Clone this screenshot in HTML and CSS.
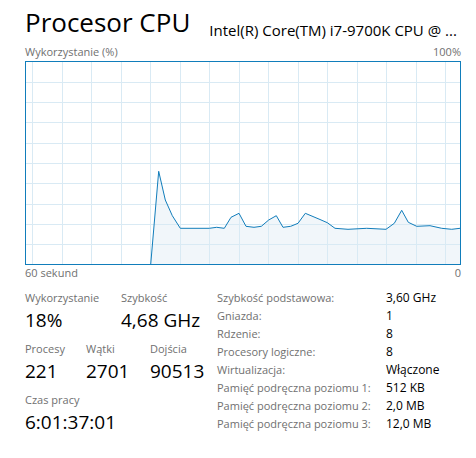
FILE: index.html
```html
<!DOCTYPE html>
<html lang="pl">
<head>
<meta charset="utf-8">
<title>Procesor CPU</title>
<link rel="stylesheet" href="styles.css">
</head>
<body>
<div class="page">
  <header class="header">
    <h1 class="title">Procesor CPU</h1>
    <div class="model">Intel(R) Core(TM) i7-9700K CPU @ ...</div>
  </header>
  <div class="graph-top">
    <span>Wykorzystanie (%)</span>
    <span>100%</span>
  </div>
  <svg class="graph" width="436" height="204" viewBox="0 0 436 204">
    <polygon class="fill" points="125.7,203 133.7,110.3 140.3,139 147.3,154.7 155.3,167.3 184.3,167.3 191.7,166.3 199.3,167.3 206,156.3 214,152.3 221,165.3 229,166.3 236.3,165.3 243.7,159 251.3,154.7 258,166.3 265.7,165.3 273,162.3 280.3,152.3 295,158.5 302.3,161.7 310,167.3 323,168.3 341.7,167.3 361,168.3 369.3,162.3 376.7,149.3 383.3,161.3 391.7,165.3 405,164.7 416.7,167.3 426.7,168.3 435,167.3 435,203"/>
    <g class="grid">
      <line x1="7.5" y1="0" x2="7.5" y2="204"/>
      <line x1="37.5" y1="0" x2="37.5" y2="204"/>
      <line x1="66.5" y1="0" x2="66.5" y2="204"/>
      <line x1="96.5" y1="0" x2="96.5" y2="204"/>
      <line x1="125.5" y1="0" x2="125.5" y2="204"/>
      <line x1="155.5" y1="0" x2="155.5" y2="204"/>
      <line x1="184.5" y1="0" x2="184.5" y2="204"/>
      <line x1="214.5" y1="0" x2="214.5" y2="204"/>
      <line x1="243.5" y1="0" x2="243.5" y2="204"/>
      <line x1="273.5" y1="0" x2="273.5" y2="204"/>
      <line x1="302.5" y1="0" x2="302.5" y2="204"/>
      <line x1="332.5" y1="0" x2="332.5" y2="204"/>
      <line x1="361.5" y1="0" x2="361.5" y2="204"/>
      <line x1="391.5" y1="0" x2="391.5" y2="204"/>
      <line x1="420.5" y1="0" x2="420.5" y2="204"/>
      <line x1="0" y1="21.5" x2="436" y2="21.5"/>
      <line x1="0" y1="41.5" x2="436" y2="41.5"/>
      <line x1="0" y1="61.5" x2="436" y2="61.5"/>
      <line x1="0" y1="82.5" x2="436" y2="82.5"/>
      <line x1="0" y1="102.5" x2="436" y2="102.5"/>
      <line x1="0" y1="122.5" x2="436" y2="122.5"/>
      <line x1="0" y1="143.5" x2="436" y2="143.5"/>
      <line x1="0" y1="163.5" x2="436" y2="163.5"/>
      <line x1="0" y1="183.5" x2="436" y2="183.5"/>
    </g>
    <polyline class="line" points="0,203.5 125.7,203.5 133.7,110.3 140.3,139 147.3,154.7 155.3,167.3 184.3,167.3 191.7,166.3 199.3,167.3 206,156.3 214,152.3 221,165.3 229,166.3 236.3,165.3 243.7,159 251.3,154.7 258,166.3 265.7,165.3 273,162.3 280.3,152.3 295,158.5 302.3,161.7 310,167.3 323,168.3 341.7,167.3 361,168.3 369.3,162.3 376.7,149.3 383.3,161.3 391.7,165.3 405,164.7 416.7,167.3 426.7,168.3 435,167.3"/>
    <rect class="frame" x="0.5" y="0.5" width="435" height="203"/>
  </svg>
  <div class="graph-bottom">
    <span>60 sekund</span>
    <span>0</span>
  </div>
  <section class="stats">
    <div class="dynamic">
      <div class="row row-a">
        <div class="stat"><div class="label">Wykorzystanie</div><div class="value">18%</div></div>
        <div class="stat"><div class="label">Szybkość</div><div class="value">4,68 GHz</div></div>
      </div>
      <div class="row row-b">
        <div class="stat"><div class="label">Procesy</div><div class="value">221</div></div>
        <div class="stat"><div class="label">Wątki</div><div class="value">2701</div></div>
        <div class="stat"><div class="label">Dojścia</div><div class="value">90513</div></div>
      </div>
      <div class="row">
        <div class="stat"><div class="label">Czas pracy</div><div class="value">6:01:37:01</div></div>
      </div>
    </div>
    <dl class="specs">
      <dt>Szybkość podstawowa:</dt><dd>3,60 GHz</dd>
      <dt>Gniazda:</dt><dd>1</dd>
      <dt>Rdzenie:</dt><dd>8</dd>
      <dt>Procesory logiczne:</dt><dd>8</dd>
      <dt>Wirtualizacja:</dt><dd>Włączone</dd>
      <dt>Pamięć podręczna poziomu 1:</dt><dd>512 KB</dd>
      <dt>Pamięć podręczna poziomu 2:</dt><dd>2,0 MB</dd>
      <dt>Pamięć podręczna poziomu 3:</dt><dd>12,0 MB</dd>
    </dl>
  </section>
</div>
</body>
</html>
```

FILE: styles.css
```css
* { box-sizing: border-box; }
html, body { margin: 0; padding: 0; background: #ffffff; }
body {
  font-family: "Open Sans", "Noto Sans", sans-serif;
  color: #000;
  width: 476px;
  height: 458px;
  overflow: hidden;
}
.page {
  padding-left: 25px;
  width: 461px;
}
.header {
  display: flex;
  align-items: flex-start;
  height: 45px;
}
.title {
  margin: 4px 0 0 0;
  font-size: 26px;
  font-weight: 400;
  line-height: 36px;
  white-space: nowrap;
}
.model {
  margin: 20px 0 0 19px;
  font-size: 15px;
  line-height: 20px;
  white-space: nowrap;
}
.graph-top, .graph-bottom {
  display: flex;
  justify-content: space-between;
  color: #707070;
}
.graph-top {
  font-size: 11px;
  line-height: 14px;
  margin-bottom: 2px;
}
.graph-bottom {
  font-size: 11px;
  line-height: 16px;
}
.graph { display: block; }
.graph .fill { fill: #f1f6fa; }
.graph .grid line { stroke: #d9eaf4; stroke-width: 1; }
.graph .line { fill: none; stroke: #117dbb; stroke-width: 1; }
.graph .frame { fill: none; stroke: #117dbb; stroke-width: 1; }

.stats {
  display: grid;
  grid-template-columns: 192px 1fr;
  align-items: start;
  margin-top: 9px;
}
.row { display: flex; margin-bottom: 9px; }
.row-a .stat:first-child { width: 96px; }
.row-b .stat:first-child { width: 61px; }
.row-b .stat:nth-child(2) { width: 64px; }
.label {
  font-size: 11px;
  line-height: 16px;
  color: #707070;
}
.value {
  font-size: 19px;
  line-height: 24px;
  margin-top: 2px;
  white-space: nowrap;
}
.specs {
  margin: 0;
  display: grid;
  grid-template-columns: 169px auto;
  align-content: start;
  row-gap: 2px;
  line-height: 16px;
}
.specs dt { color: #707070; white-space: nowrap; font-size: 11px; }
.specs dd { margin: 0; color: #000; white-space: nowrap; font-size: 12px; }
```
